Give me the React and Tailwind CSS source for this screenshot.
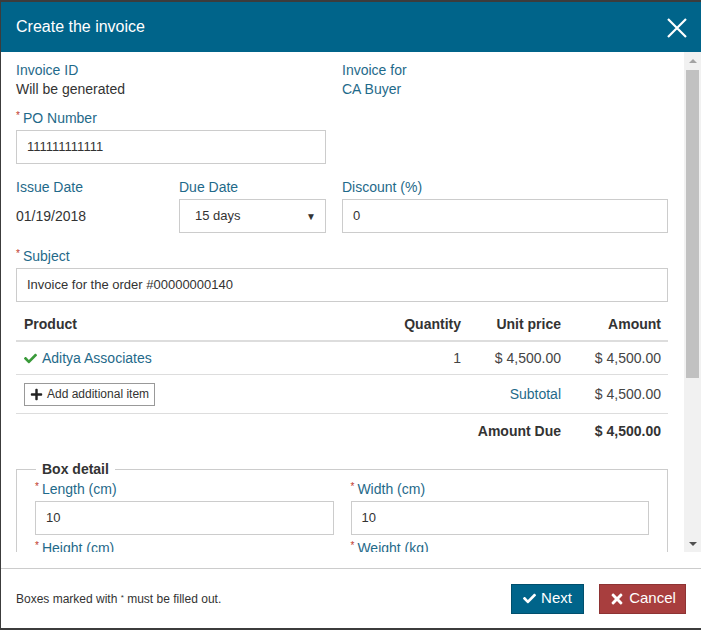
import React from 'react'
import { FaCheck, FaPlus, FaTimes } from 'react-icons/fa'

const label = 'h-[19px] pt-px text-[14px] leading-[19px] text-[#1f6a8a]'
const input = 'h-[34px] border border-[#ccc] bg-white px-[10px] flex items-center text-[13px] text-[#333]'

function Req() {
  return <span className="relative top-[-4px] mr-[3px] text-[10px] leading-none text-[#c0392b]">*</span>
}

function Field({ name, value, req, className = '' }) {
  return (
    <div className={className}>
      <div className={label}>{req && <Req />}{name}</div>
      <div className={`${input} mt-[3px]`}>{value}</div>
    </div>
  )
}

export default function App() {
  return (
    <div className="h-[630px] w-[701px] bg-[#3c3c3c] pt-[2px] pb-[2px] pl-px font-['Liberation_Sans',Arial,sans-serif]">
      <div className="flex h-full flex-col bg-white">
        {/* header */}
        <div className="flex h-[50px] shrink-0 items-center justify-between bg-[#00648a] pl-[15px] pr-[13px]">
          <div className="text-[16px] text-white">Create the invoice</div>
          <svg width="22" height="22" viewBox="0 0 22 22" className="mt-[2px]">
            <path d="M2 2 L20 20 M20 2 L2 20" stroke="white" strokeWidth="2.2" />
          </svg>
        </div>

        {/* body */}
        <div className="flex h-[500px] shrink-0">
          <div className="flex-1 overflow-hidden pt-[9px] pl-[15px] pr-4 text-[#333]">
            <div className="grid grid-cols-[310px_326px] gap-x-4 text-[14px] leading-[19px]">
              <div>
                <div className="text-[#1f6a8a]">Invoice ID</div>
                <div className="text-[#333]">Will be generated</div>
              </div>
              <div>
                <div className="text-[#1f6a8a]">Invoice for</div>
                <div className="text-[#1f6a8a]">CA Buyer</div>
              </div>
            </div>

            <Field name="PO Number" value="111111111111" req className="mt-[9px] w-[310px]" />

            <div className="mt-[13px] grid grid-cols-[147px_147px_326px] gap-x-4">
              <div>
                <div className={label}>Issue Date</div>
                <div className="mt-[3px] flex h-[34px] items-center text-[14px] text-[#333]">01/19/2018</div>
              </div>
              <div>
                <div className={label}>Due Date</div>
                <div className={`${input} mt-[3px] justify-between pl-[15px] pr-[9px]`}>
                  <span>15 days</span>
                  <span className="text-[10px] text-[#333]">▼</span>
                </div>
              </div>
              <Field name="Discount (%)" value="0" />
            </div>

            <Field name="Subject" value="Invoice for the order #00000000140" req className="mt-[13px]" />

            {/* table */}
            <div className="text-[14px] leading-[19px]">
              <div className="flex h-[40px] items-end border-b-2 border-[#ddd] pb-[6px] font-bold text-[#333]">
                <div className="flex-1 pl-2">Product</div>
                <div className="w-[100px] pr-[7px] text-right">Quantity</div>
                <div className="w-[100px] pr-[7px] text-right">Unit price</div>
                <div className="w-[100px] pr-[7px] text-right">Amount</div>
              </div>
              <div className="flex h-[33px] items-center border-b border-[#ddd] text-[#444]">
                <div className="flex flex-1 items-center gap-[5px] pl-2 text-[#1f6a8a]">
                  <FaCheck className="text-[13px] text-[#3a9a3a]" />
                  Aditya Associates
                </div>
                <div className="w-[100px] pr-[7px] text-right">1</div>
                <div className="w-[100px] pr-[7px] text-right">$ 4,500.00</div>
                <div className="w-[100px] pr-[7px] text-right">$ 4,500.00</div>
              </div>
              <div className="flex h-[39px] items-center border-b border-[#ddd] text-[#444]">
                <div className="flex-1 pl-2">
                  <div className="inline-flex h-[23px] items-center gap-[4px] border border-[#999] px-[5px] text-[12px] text-[#333]">
                    <FaPlus className="text-[13px] text-[#222]" />
                    Add additional item
                  </div>
                </div>
                <div className="w-[100px] pr-[7px] text-right text-[#1f6a8a]">Subtotal</div>
                <div className="w-[100px] pr-[7px] text-right">$ 4,500.00</div>
              </div>
              <div className="flex h-[34px] items-center font-bold text-[#333]">
                <div className="flex-1" />
                <div className="w-[100px] pr-[7px] text-right">Amount Due</div>
                <div className="w-[100px] pr-[7px] text-right">$ 4,500.00</div>
              </div>
            </div>

            {/* box detail */}
            <fieldset className="mt-[12px] border border-[#ccc] pl-[18px] pr-[18px] pb-4">
              <legend className="ml-px px-[6px] text-[14px] leading-[19px] font-bold text-[#333]">Box detail</legend>
              <div className="grid grid-cols-2 gap-x-[17px]">
                <Field name="Length (cm)" value="10" req />
                <Field name="Width (cm)" value="10" req />
                <Field name="Height (cm)" value="10" req className="mt-[3px]" />
                <Field name="Weight (kg)" value="1" req className="mt-[3px]" />
              </div>
            </fieldset>
          </div>

          {/* scrollbar */}
          <div className="flex w-[17px] flex-col items-center bg-[#f1f1f1]">
            <div className="flex h-[17px] items-center justify-center">
              <div className="h-0 w-0 border-x-[4px] border-b-[4px] border-x-transparent border-b-[#a3a3a3]" />
            </div>
            <div className="mt-px h-[308px] w-[13px] bg-[#c1c1c1]" />
            <div className="flex-1" />
            <div className="flex h-[17px] items-center justify-center">
              <div className="h-0 w-0 border-x-[4px] border-t-[4px] border-x-transparent border-t-[#505050]" />
            </div>
          </div>
        </div>

        <div className="h-4 shrink-0" />

        {/* footer */}
        <div className="flex flex-1 items-center justify-between border-t border-[#ccc] pl-[15px] pr-[15px]">
          <div className="text-[12px] text-[#333]">
            Boxes marked with <span className="relative top-[-3px] text-[8px]">*</span> must be filled out.
          </div>
          <div className="flex gap-[15px]">
            <div className="flex h-[30px] w-[73px] items-center justify-center gap-[5px] border border-[#004f6d] bg-[#00648a] text-[15px] text-white">
              <FaCheck className="text-[13px]" />
              Next
            </div>
            <div className="flex h-[30px] w-[87px] items-center justify-center gap-[4px] border border-[#8e3333] bg-[#a83e3e] text-[15px] text-white">
              <FaTimes className="text-[16px]" />
              Cancel
            </div>
          </div>
        </div>
      </div>
    </div>
  )
}
